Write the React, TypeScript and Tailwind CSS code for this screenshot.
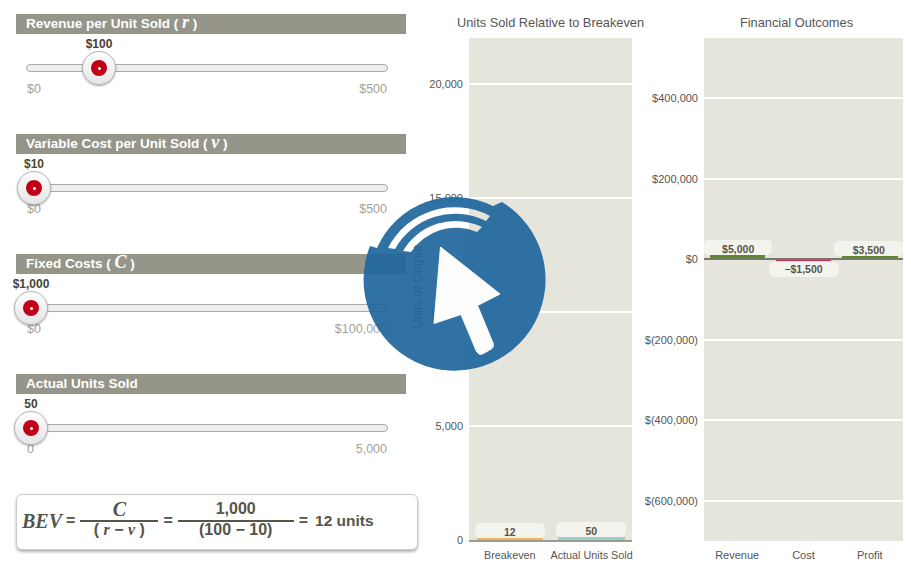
import React from 'react';

const sliders = [
  { title: 'Revenue per Unit Sold (', symbol: 'r', value: '$100', thumb: 73, valueColor: 'text-[#4a3a3a]', min: '$0', max: '$500' },
  { title: 'Variable Cost per Unit Sold (', symbol: 'v', value: '$10', thumb: 8, valueColor: 'text-[#4a4a2a]', min: '$0', max: '$500' },
  { title: 'Fixed Costs (', symbol: 'C', value: '$1,000', thumb: 5, valueColor: 'text-[#44443a]', min: '$0', max: '$100,000' },
  { title: 'Actual Units Sold', symbol: '', value: '50', thumb: 5, valueColor: 'text-[#44443a]', min: '0', max: '5,000' },
];

// y offsets are from the top of the plot area
const unitTicks = [
  { label: '20,000', y: 45 },
  { label: '15,000', y: 159 },
  { label: '10,000', y: 273 },
  { label: '5,000', y: 387 },
];

const moneyTicks = [
  { label: '$400,000', y: 59 },
  { label: '$200,000', y: 140 },
  { label: '$(200,000)', y: 301 },
  { label: '$(400,000)', y: 381 },
  { label: '$(600,000)', y: 462 },
];

const Slider = ({ s }: { s: (typeof sliders)[number] }) => (
  <section className="h-[120px]">
    <div className="h-5 bg-[#96958a] pl-[10px] text-[13.5px] leading-5 font-bold whitespace-nowrap text-white">
      {s.title}
      {s.symbol && (
        <>
          {' '}
          <i className="font-['Liberation_Serif',serif] text-[18px] leading-[0]">{s.symbol}</i> )
        </>
      )}
    </div>
    <div className="relative mx-[10px] pt-[30px]">
      <div className="h-2 w-[362px] rounded-full border border-[#aaaaaa] bg-[#eeeeee]"></div>
      <div className="mt-[7px] flex w-[361px] justify-between pl-px text-[12.5px] leading-5 text-[#a2a298]">
        <span>{s.min}</span>
        <span>{s.max}</span>
      </div>
      <div
        className={`absolute top-[3px] -translate-x-1/2 text-[12px] leading-[14px] font-bold whitespace-nowrap ${s.valueColor}`}
        style={{ left: s.thumb }}
      >
        {s.value}
      </div>
      <div
        className="absolute top-[17px] flex h-[34px] w-[34px] -translate-x-1/2 items-center justify-center rounded-full border border-[#b4b4b4] bg-linear-to-b from-white to-[#e6e6e6] shadow-[0_1px_2px_rgba(0,0,0,0.35)]"
        style={{ left: s.thumb }}
      >
        <div className="flex h-4 w-4 items-center justify-center rounded-full bg-[#c10018]">
          <div className="h-[3px] w-[3px] rounded-full bg-white"></div>
        </div>
      </div>
    </div>
  </section>
);

const Fraction = ({ top, bottom, width, serif }: { top: React.ReactNode; bottom: React.ReactNode; width: string; serif?: boolean }) => (
  <div className={`flex flex-col items-center pb-[3px] ${width}`}>
    <div className={`mb-[3px] leading-4 ${serif ? "font-['Liberation_Serif',serif] text-[20px] italic" : 'text-[16px]'}`}>{top}</div>
    <div className="h-[2px] w-full bg-[#55554a]"></div>
    <div className="text-[16px] leading-4 whitespace-nowrap">{bottom}</div>
  </div>
);

const Formula = () => (
  <div className="flex h-[56px] w-[402px] items-center rounded-md border border-[#cccccc] bg-white pb-[2px] pl-[5px] font-bold text-[#55554a] shadow-[0_2px_3px_rgba(0,0,0,0.3)]">
    <i className="font-['Liberation_Serif',serif] text-[20px]">BEV</i>
    <span className="mr-[5px] ml-[4px] text-[16px]">=</span>
    <Fraction
      width="w-[78px]"
      serif
      top="C"
      bottom={
        <>
          ( <i className="font-['Liberation_Serif',serif]">r</i> − <i className="font-['Liberation_Serif',serif]">v</i> )
        </>
      }
    />
    <span className="mx-[5px] text-[16px]">=</span>
    <Fraction width="w-[116px]" top="1,000" bottom="(100 − 10)" />
    <span className="mx-[5px] text-[16px]">=</span>
    <span className="ml-[2px] text-[15.5px]">12 units</span>
  </div>
);

const Title = ({ children, className = '' }: { children: React.ReactNode; className?: string }) => (
  <h2 className={`flex h-[38px] items-center justify-center pt-2 text-[12.8px] font-normal whitespace-nowrap text-[#555555] ${className}`}>
    {children}
  </h2>
);

const Tick = ({ label, y }: { label: string; y: number }) => (
  <>
    <div className="absolute right-full mr-[6px] -translate-y-1/2 text-[11px] leading-none whitespace-nowrap text-[#555555]" style={{ top: y + 1 }}>
      {label}
    </div>
    <div className="absolute inset-x-0 h-[2px] bg-white" style={{ top: y }}></div>
  </>
);

const Tag = ({ children, className = '' }: { children: React.ReactNode; className?: string }) => (
  <div className={`h-[15px] shrink-0 rounded-[5px] bg-[#f4f4ef] text-center text-[10.5px] font-bold whitespace-nowrap text-[#55554a] ${className}`}>
    {children}
  </div>
);

const PlayOverlay = () => (
  <svg viewBox="360 185 190 195" className="absolute top-[185px] left-[360px] h-[195px] w-[190px]">
    <path
      fill="#1f669d"
      fillOpacity="0.92"
      fillRule="evenodd"
      d="M502 202 A91 91 0 1 1 370 246 L377 248 A85 85 0 0 1 493 206 Z M388 248 A75 75 0 0 1 490 216 L486 221 A69 69 0 0 0 395 249 Z M403 251 A61 61 0 0 1 482 227 L477 232 A54 54 0 0 0 411 252 Z"
    />
    <path
      fill="#fdfdfb"
      stroke="#fdfdfb"
      strokeWidth="1"
      strokeLinejoin="round"
      d="M440.5 247 L500 294 L477.5 305.5 L493 343 Q494.5 347.5 490.5 349.5 L482.5 354 Q478.5 355.5 476.5 351.5 L461 314.5 L434 323.5 Z"
    />
  </svg>
);

export default function App() {
  return (
    <div className="relative flex h-[569px] w-[911px] overflow-hidden bg-white font-['Liberation_Sans',Arial,sans-serif]">
      <div className="mt-[14px] ml-4 w-[390px] shrink-0">
        {sliders.map((s) => (
          <Slider key={s.title} s={s} />
        ))}
        <Formula />
      </div>

      <div className="ml-[63px] w-[163px] shrink-0">
        <Title>Units Sold Relative to Breakeven</Title>
        <div className="relative h-[503px] bg-[#e6e5dc]">
          {unitTicks.map((t) => (
            <Tick key={t.label} {...t} />
          ))}
          <div className="absolute top-[497px] right-full mr-[6px] text-[11px] leading-none text-[#555555]">0</div>
          <div className="absolute top-[249px] -left-[51px] -translate-x-1/2 -translate-y-1/2 -rotate-90 text-[12.5px] whitespace-nowrap text-[#555555]">
            Units of Output
          </div>
          <div className="grid h-[502px] grid-cols-2">
            <div className="flex flex-col items-center justify-end">
              <Tag className="w-[70px] leading-[18px]">12</Tag>
              <div className="h-[2px] w-[66px] bg-[#eeb35c]"></div>
            </div>
            <div className="flex flex-col items-center justify-end">
              <Tag className="w-[70px] leading-[18px]">50</Tag>
              <div className="h-[3px] w-[67px] bg-[#97cfcf]"></div>
            </div>
          </div>
          <div className="h-[2px] bg-[#9c9b92]"></div>
        </div>
        <div className="mt-[6px] grid grid-cols-2 text-center text-[10.8px] leading-4 whitespace-nowrap text-[#555555]">
          <span>Breakeven</span>
          <span>Actual Units Sold</span>
        </div>
      </div>

      <div className="ml-[72px] w-[199px] shrink-0">
        <Title className="pr-[14px]">Financial Outcomes</Title>
        <div className="relative h-[503px] bg-[#e6e5dc]">
          {moneyTicks.map((t) => (
            <Tick key={t.label} {...t} />
          ))}
          <div className="absolute top-[216px] right-full mr-[6px] text-[11px] leading-none text-[#555555]">$0</div>
          <div className="absolute inset-x-0 top-[220px] h-[2px] bg-[#77776c]"></div>
          <div className="grid h-[220px] grid-cols-3">
            <div className="flex flex-col items-center justify-end">
              <Tag className="ml-[2px] w-[68px] leading-[18px]">$5,000</Tag>
              <div className="h-[3px] w-[55px] bg-[#5a8a2c]"></div>
            </div>
            <div></div>
            <div className="flex flex-col items-center justify-end">
              <Tag className="mr-[2px] w-[69px] leading-[18px]">$3,500</Tag>
              <div className="h-[2px] w-[56px] bg-[#5a8a2c]"></div>
            </div>
          </div>
          <div className="grid grid-cols-3 pt-[2px]">
            <div></div>
            <div className="flex flex-col items-center">
              <div className="h-px w-[55px] bg-[#c8305c]"></div>
              <Tag className="mt-px w-[70px] leading-[15px]">−$1,500</Tag>
            </div>
            <div></div>
          </div>
        </div>
        <div className="mt-[6px] grid grid-cols-3 text-center text-[11px] leading-4 whitespace-nowrap text-[#555555]">
          <span>Revenue</span>
          <span>Cost</span>
          <span>Profit</span>
        </div>
      </div>

      <PlayOverlay />
    </div>
  );
}
